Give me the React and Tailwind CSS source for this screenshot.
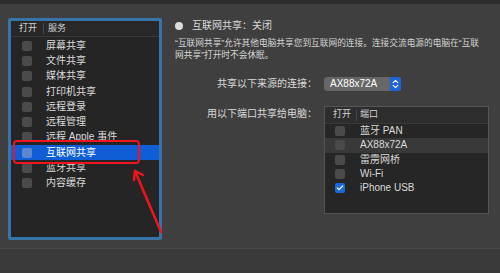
import { Check } from "lucide-react";

const services = [
  "屏幕共享",
  "文件共享",
  "媒体共享",
  "打印机共享",
  "远程登录",
  "远程管理",
  "远程 Apple 事件",
  "互联网共享",
  "蓝牙共享",
  "内容缓存",
];

const ports = [
  { name: "蓝牙 PAN", on: false },
  { name: "AX88x72A", on: false, hl: true },
  { name: "雷雳网桥", on: false },
  { name: "Wi-Fi", on: false },
  { name: "iPhone USB", on: true },
];

function Box({ on, selected }) {
  if (on) {
    return (
      <span className="w-[10px] h-[10px] rounded-[2px] bg-[#1b68dd] flex items-center justify-center">
        <Check className="w-[8px] h-[8px] text-white" strokeWidth={3.5} />
      </span>
    );
  }
  return (
    <span
      className={
        "w-[10px] h-[10px] rounded-[2px] " +
        (selected ? "bg-[#5d87cf]" : "bg-[#4b4b4b]")
      }
    />
  );
}

export default function App() {
  return (
    <div className="relative w-[500px] h-[273px] overflow-hidden bg-[#3f3f3f] text-[#dadada] font-['Liberation_Sans','Noto_Sans_CJK_SC',sans-serif] flex flex-col">
      {/* top strip */}
      <div className="h-[4px] bg-[#2e2e2e] shrink-0" />

      <div className="h-[244px] flex shrink-0">
        {/* Services list */}
        <div className="ml-[8px] mt-[14px] w-[154px] h-[222px] border-[3px] border-[#3774a9] rounded-[2px] bg-[#252525] flex flex-col">
          <div className="h-[16px] flex items-center bg-[#282828] border-b border-[#3a3a3a] text-[9px] text-[#d2d2d2]">
            <span className="w-[32px] pl-[8px]">打开</span>
            <span className="w-px h-[11px] bg-[#4a4a4a]" />
            <span className="pl-[4px]">服务</span>
          </div>
          <div className="pt-[1px]">
            {services.map((s, i) => {
              const sel = i === 7;
              return (
                <div
                  key={s}
                  className={
                    "h-[15.3px] flex items-center text-[10px] leading-none " +
                    (sel ? "bg-[#0f5ed6] text-white" : "")
                  }
                >
                  <span className="w-[32px] pl-[11px] flex">
                    <Box selected={sel} />
                  </span>
                  <span className="pl-[3px]">{s}</span>
                </div>
              );
            })}
          </div>
        </div>

        {/* Right side */}
        <div className="ml-[13px] mt-[16px] flex flex-col">
          <div className="h-[12px] flex items-center gap-[9px] text-[10px] leading-[12px]">
            <span className="w-[8px] h-[8px] rounded-full bg-[#dcdcdc]" />
            <span>互联网共享：关闭</span>
          </div>
          <p className="mt-[5px] text-[8.7px] leading-[12px] whitespace-nowrap text-[#d6d6d6]">
            “互联网共享”允许其他电脑共享您到互联网的连接。连接交流电源的电脑在“互联
            <br />
            网共享”打开时不会休眠。
          </p>

          <div className="mt-[16px] flex items-center">
            <span className="w-[142px] text-right text-[10px] leading-[12px]">共享以下来源的连接：</span>
            <div className="ml-[7px] w-[77px] h-[14px] rounded-[3px] bg-[#676767] flex items-center overflow-hidden">
              <span className="flex-1 pl-[6px] text-[10px] leading-none text-white">AX88x72A</span>
              <span className="w-[11px] h-full bg-[#1c64d8] flex items-center justify-center">
                <svg width="7" height="10" viewBox="0 0 7 10" fill="none" stroke="white" strokeWidth="1.2" strokeLinecap="round" strokeLinejoin="round">
                  <path d="M1.2 3.6 L3.5 1.4 L5.8 3.6" />
                  <path d="M1.2 6.4 L3.5 8.6 L5.8 6.4" />
                </svg>
              </span>
            </div>
          </div>

          <div className="mt-[15px] flex items-start">
            <span className="w-[142px] mt-[2px] text-right text-[10px] leading-[12px]">用以下端口共享给电脑：</span>
            <div className="ml-[7px] w-[165px] h-[108px] border border-[#555555] bg-[#262626] flex flex-col">
              <div className="h-[17px] flex items-center bg-[#2d2d2d] border-b border-[#3a3a3a] text-[9px] text-[#d2d2d2]">
                <span className="w-[31px] pl-[8px]">打开</span>
                <span className="w-px h-[11px] bg-[#4a4a4a]" />
                <span className="pl-[3px]">端口</span>
              </div>
              <div>
                {ports.map((p) => (
                  <div
                    key={p.name}
                    className={
                      "h-[14.3px] flex items-center text-[10px] leading-none " +
                      (p.hl ? "bg-[#393939]" : "")
                    }
                  >
                    <span className="w-[35px] pl-[10px] flex">
                      <Box on={p.on} />
                    </span>
                    <span>{p.name}</span>
                  </div>
                ))}
              </div>
            </div>
          </div>
        </div>
      </div>

      {/* bottom */}
      <div className="h-px bg-[#4a4a4a] shrink-0" />
      <div className="flex-1 bg-[#3a3a3a]" />

      {/* annotations */}
      <div className="absolute left-[13px] top-[140px] w-[127px] h-[24px] border-[2.5px] border-[#f0141e] rounded-[4px]" />
      <svg className="absolute left-0 top-0" width="500" height="273" fill="none" stroke="#f0141e" strokeWidth="2.5" strokeLinecap="round" strokeLinejoin="round">
        <path d="M161 232 L135 171" />
        <path d="M134 180 L135 171 L143 175" />
      </svg>
    </div>
  );
}
